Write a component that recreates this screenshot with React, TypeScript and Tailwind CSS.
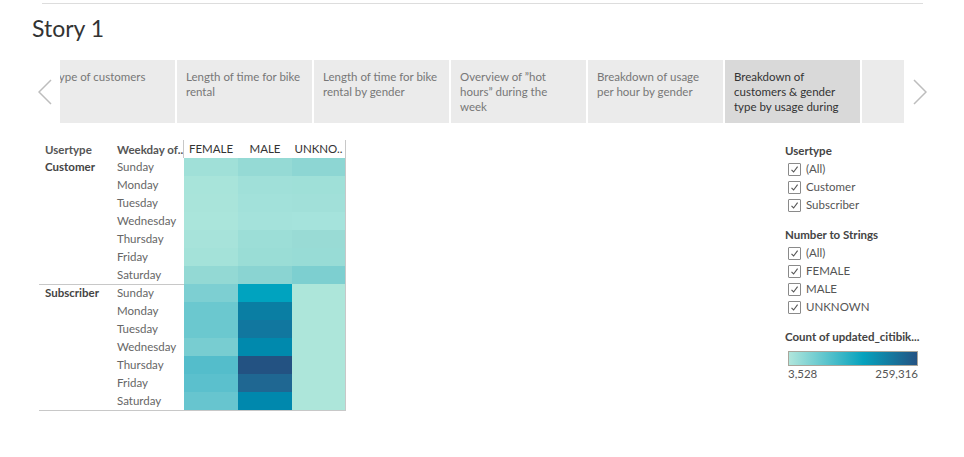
import React from "react"

const font = { fontFamily: "Lato, 'Liberation Sans', sans-serif" }

const stories = [
  "Type of customers",
  "Length of time for bike rental",
  "Length of time for bike rental by gender",
  "Overview of \u201dhot hours\u201d during the week",
  "Breakdown of usage per hour by gender",
  "Breakdown of customers & gender type by usage during",
  "",
]

const days = ["Sunday", "Monday", "Tuesday", "Wednesday", "Thursday", "Friday", "Saturday"]

const customerCells = [
  ["#a0e0d8", "#95dad5", "#8dd6d3"],
  ["#a8e4da", "#a0e0d9", "#9fe0d8"],
  ["#a9e4da", "#a2e1da", "#a1e0d9"],
  ["#aae5db", "#a4e2db", "#a5e3dc"],
  ["#a7e3da", "#9cded7", "#99dbd5"],
  ["#a4e2d9", "#9addd6", "#98dcd6"],
  ["#93d9d4", "#8ad4d2", "#7dcfd0"],
]

const subscriberCells = [
  ["#7dcfd2", "#00a3bf", "#ade6da"],
  ["#6bc8cf", "#0a7ea3", "#ade6da"],
  ["#6bc8cf", "#11779f", "#ade6da"],
  ["#78cdd1", "#0089ad", "#ade6da"],
  ["#54bdcb", "#235282", "#ade6da"],
  ["#5bc0cd", "#1f6792", "#ade6da"],
  ["#67c5cf", "#0088ad", "#ade6da"],
]

function Check({ label }: { label: string }) {
  return (
    <div className="flex items-center h-[18px] pl-[3px]">
      <div className="w-[13px] h-[13px] border border-[#8a8a8a] rounded-[1px] flex items-center justify-center bg-white">
        <svg width="9" height="9" viewBox="0 0 9 9">
          <polyline points="1.5,4.8 3.6,7 7.6,1.6" fill="none" stroke="#555" strokeWidth="1.1" />
        </svg>
      </div>
      <span className="ml-[5px] text-[11.5px] text-[#555]">{label}</span>
    </div>
  )
}

function Block({ name, cells, top }: { name: string; cells: string[][]; top?: boolean }) {
  return (
    <div className="flex">
      <div className={`flex w-[145px] ${top ? "shadow-[inset_0_1px_0_#c8c8c8]" : ""}`}>
        <div className="w-[73px] pl-[6px] text-[11.5px] font-bold text-[#444] leading-[18px]">{name}</div>
        <div className="w-[72px] pl-[5px]">
          {days.map((d) => (
            <div key={d} className="h-[18px] leading-[18px] text-[11.5px] text-[#666]">
              {d}
            </div>
          ))}
        </div>
      </div>
      <div className="border-r border-[#c8c8c8]">
        {cells.map((row, i) => (
          <div key={i} className="flex h-[18px]">
            {row.map((c, j) => (
              <div
                key={j}
                className={j === 2 ? "w-[53px]" : "w-[54px]"}
                style={{ backgroundColor: c }}
              />
            ))}
          </div>
        ))}
      </div>
    </div>
  )
}

export default function App() {
  return (
    <div className="w-[964px] h-[457px] bg-white overflow-hidden" style={font}>
      <div className="ml-[42px] mt-[3px] w-[881px] h-px bg-[#dddddd]" />

      <h1 className="ml-[32px] mt-[10px] text-[23px] leading-[28px] text-[#333]">Story 1</h1>

      {/* story points */}
      <div className="mt-[18px] flex h-[63px]">
        <div className="w-[60px] flex items-center justify-end pr-[8px]">
          <svg width="14" height="26" viewBox="0 0 14 26">
            <polyline points="13,1 1,13 13,25" fill="none" stroke="#bdbdbd" strokeWidth="1.5" />
          </svg>
        </div>
        <div className="w-[844px] overflow-hidden">
          <div className="flex gap-[2px] -ml-[20px]">
            {stories.map((s, i) => (
              <div
                key={i}
                className={`shrink-0 h-[63px] pr-[10px] pt-[9px] text-[11.5px] leading-[15px] ${
                  i === 5 ? "bg-[#d9d9d9] text-[#333]" : "bg-[#ebebeb] text-[#777]"
                } ${i === 6 ? "w-[43px]" : "w-[135px]"} ${i === 0 ? "pl-[13px]" : "pl-[9px]"}`}
              >
                {s}
              </div>
            ))}
          </div>
        </div>
        <div className="flex-1 flex items-center pl-[9px]">
          <svg width="14" height="26" viewBox="0 0 14 26">
            <polyline points="1,1 13,13 1,25" fill="none" stroke="#bdbdbd" strokeWidth="1.5" />
          </svg>
        </div>
      </div>

      <div className="flex mt-[17px]">
        {/* heat map */}
        <div className="ml-[39px] w-[307px]">
          <div className="flex h-[18px]">
            <div className="w-[73px] pl-[6px] leading-[20px] text-[11.5px] font-bold text-[#555]">Usertype</div>
            <div className="w-[71px] pl-[5px] leading-[20px] text-[11.5px] font-bold text-[#555] whitespace-nowrap">
              Weekday of..
            </div>
            <div className="flex border-l border-r border-[#c8c8c8] text-[11.5px] text-[#333] leading-[18px]">
              <div className="w-[54px] text-center">FEMALE</div>
              <div className="w-[54px] text-center">MALE</div>
              <div className="w-[53px] text-center">UNKNO..</div>
            </div>
          </div>
          <Block name="Customer" cells={customerCells} />
          <Block name="Subscriber" cells={subscriberCells} top />
          <div className="h-px w-[307px] bg-[#c8c8c8]" />
        </div>

        {/* filters and legend */}
        <div className="ml-[439px] w-[140px]">
          <div className="text-[11.5px] font-bold text-[#444] leading-[18px] mt-[2px]">Usertype</div>
          <Check label="(All)" />
          <Check label="Customer" />
          <Check label="Subscriber" />
          <div className="text-[11.5px] font-bold text-[#444] leading-[18px] mt-[12px]">Number to Strings</div>
          <Check label="(All)" />
          <Check label="FEMALE" />
          <Check label="MALE" />
          <Check label="UNKNOWN" />
          <div className="text-[11.5px] font-bold text-[#444] leading-[18px] mt-[12px] whitespace-nowrap">
            Count of updated_citibik...
          </div>
          <div className="ml-[3px] mt-[5px] w-[130px] h-[15px] border border-[#a9a69c] bg-[linear-gradient(to_right,#b0e6dc,#06a2bd_58%,#245383)]" />
          <div className="ml-[3px] w-[130px] flex justify-between text-[11.5px] text-[#555] leading-[15px]">
            <span>3,528</span>
            <span>259,316</span>
          </div>
        </div>
      </div>
    </div>
  )
}
